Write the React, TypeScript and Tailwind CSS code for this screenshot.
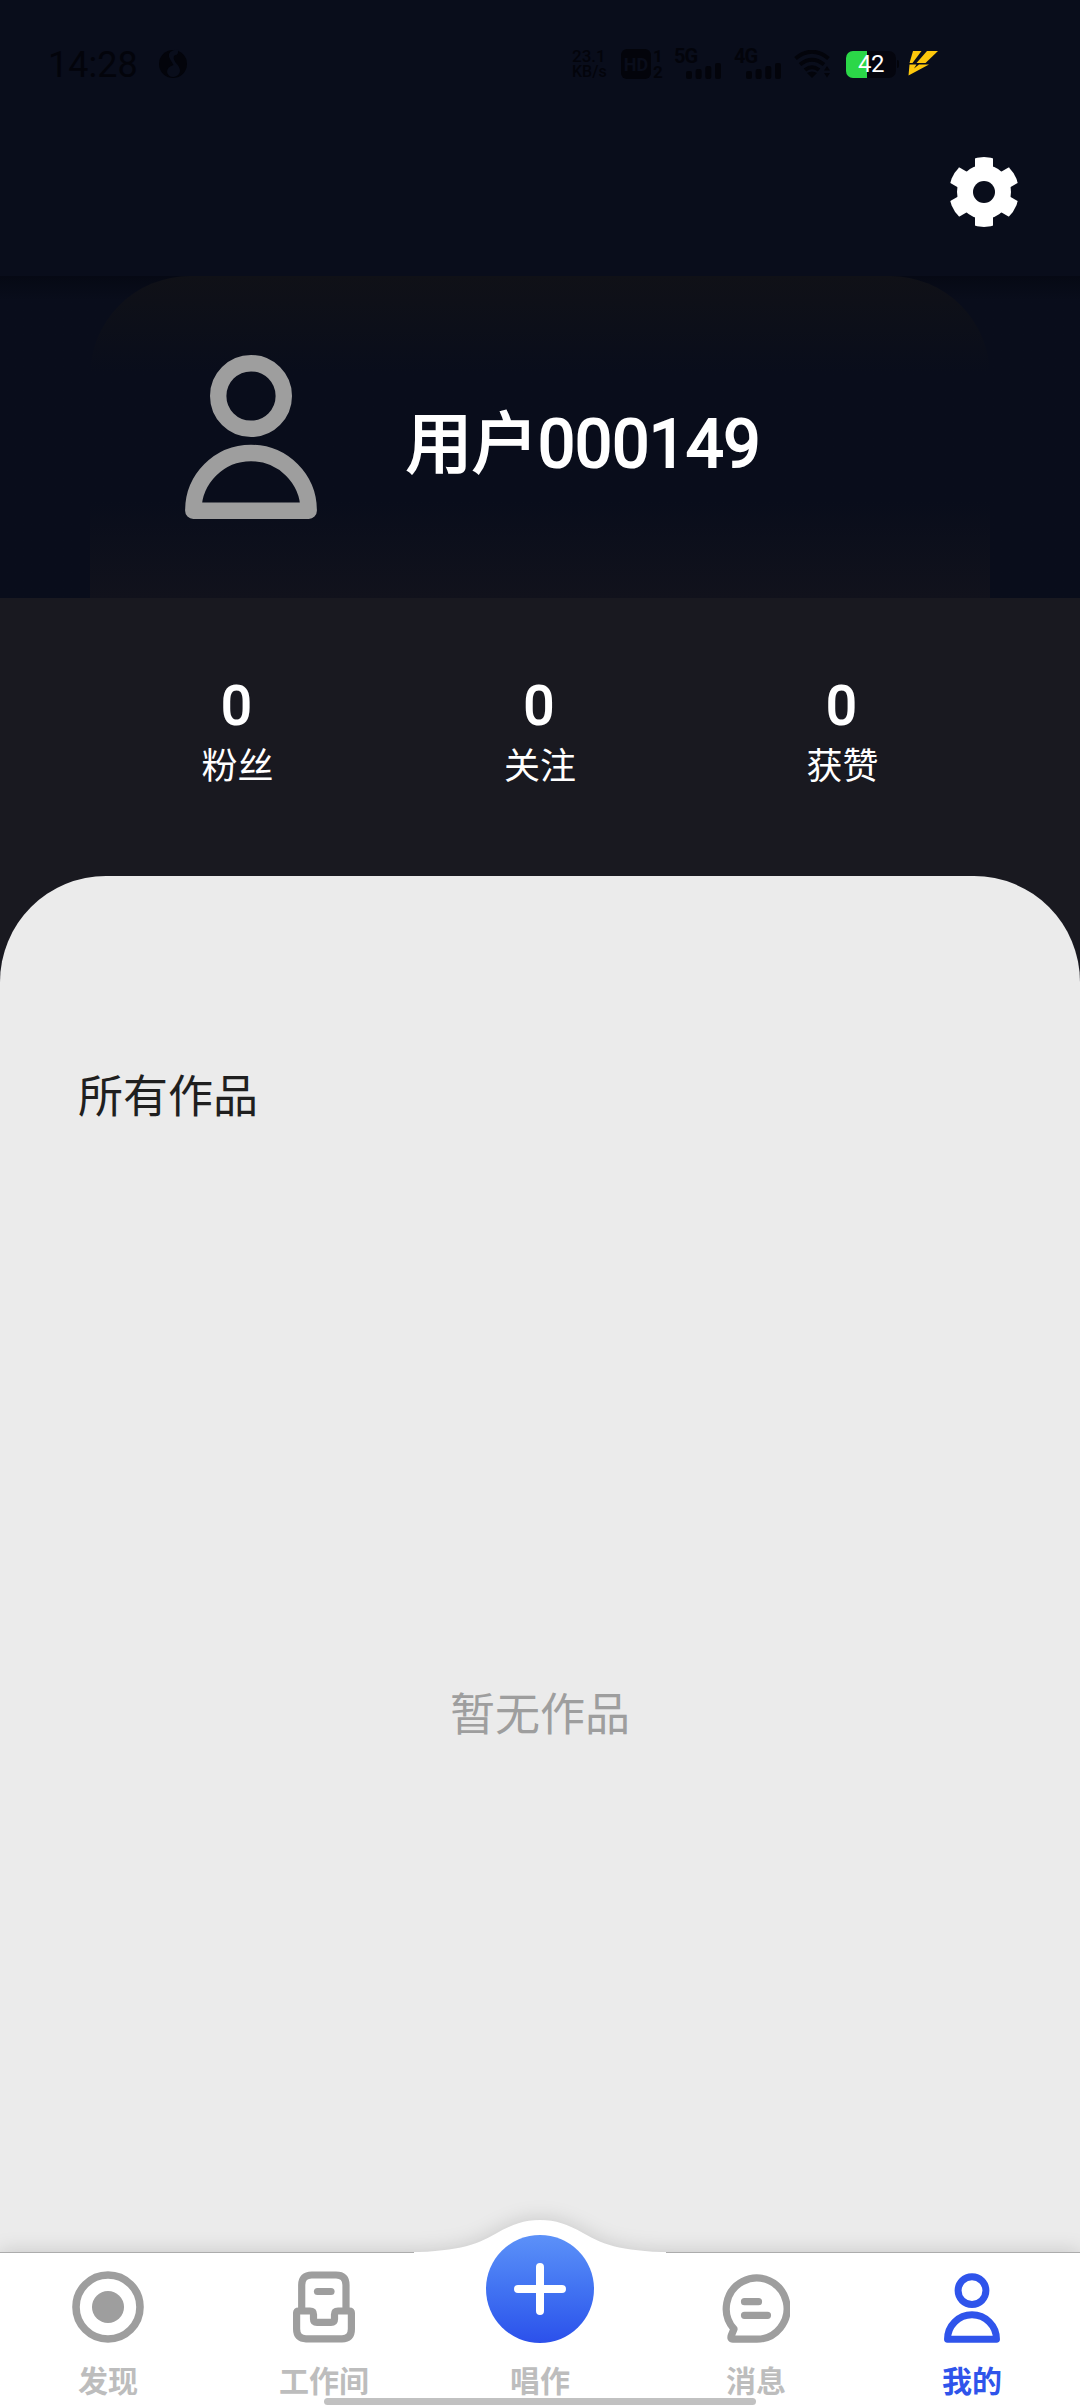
import type { ReactNode } from "react";
import clsx from "clsx";

interface Stat {
  label: string;
  value: number;
}

interface Tab {
  label: string;
  icon: ReactNode;
  active?: boolean;
}

const stats: Stat[] = [
  { label: "粉丝", value: 0 },
  { label: "关注", value: 0 },
  { label: "获赞", value: 0 },
];

function PersonIcon({ className }: { className?: string }) {
  return (
    <svg
      viewBox="0 0 132 164"
      fill="none"
      stroke="currentColor"
      strokeWidth="16.4"
      strokeLinejoin="round"
      className={className}
    >
      <circle cx="66" cy="41" r="32.8" />
      <path d="M8.3 155.7A57.7 57.7 0 0 1 123.7 155.7Z" />
    </svg>
  );
}

function GearIcon() {
  return (
    <svg viewBox="-35 -35 70 70" className="size-[70px] text-white">
      <defs>
        <clipPath id="gear-edge">
          <circle r="35" />
        </clipPath>
        <mask id="gear-hole">
          <rect x="-35" y="-35" width="70" height="70" fill="#fff" />
          <circle r="11" fill="#000" />
        </mask>
      </defs>
      <g fill="currentColor" clipPath="url(#gear-edge)" mask="url(#gear-hole)">
        <circle r="27" />
        <rect x="-9" y="-36" width="18" height="72" />
        <rect x="-9" y="-36" width="18" height="72" transform="rotate(60)" />
        <rect x="-9" y="-36" width="18" height="72" transform="rotate(120)" />
      </g>
    </svg>
  );
}

function DiscoverIcon() {
  return (
    <svg viewBox="0 0 72 72" fill="none" className="size-[72px]">
      <circle cx="36" cy="36" r="32" stroke="currentColor" strokeWidth="7.6" />
      <circle cx="36" cy="36" r="16" fill="currentColor" />
    </svg>
  );
}

function StudioIcon() {
  return (
    <svg
      viewBox="0 0 64 72"
      fill="none"
      stroke="currentColor"
      strokeWidth="7.2"
      strokeLinecap="round"
      strokeLinejoin="round"
      className="h-[72px] w-[64px]"
    >
      <path d="M9.7 38V14Q9.7 4 19.7 4H44Q54 4 54 14V38" />
      <path d="M25.5 20.5H39" />
      <path d="M4.6 42Q4.6 40 6.6 40H18Q21.5 40 21.5 43.5V48Q21.5 51.3 25 51.3H39Q42.5 51.3 42.5 48V43.5Q42.5 40 46 40H57.4Q59.4 40 59.4 42V58Q59.4 67.8 50 67.8H14Q4.6 67.8 4.6 58Z" />
    </svg>
  );
}

function MessageIcon() {
  return (
    <svg
      viewBox="0 0 68 69"
      fill="none"
      stroke="currentColor"
      strokeWidth="7.2"
      strokeLinecap="round"
      strokeLinejoin="round"
      className="mt-[3px] h-[69px] w-[68px]"
    >
      <path d="M12 55A30.4 30.6 0 1 1 34 65.2H11Q8 65.2 9.3 61.5Z" />
      <path d="M22.5 27.7H36.5M22.5 41.3H45.5" />
    </svg>
  );
}

const leftTabs: Tab[] = [
  { label: "发现", icon: <DiscoverIcon /> },
  { label: "工作间", icon: <StudioIcon /> },
];

const rightTabs: Tab[] = [
  { label: "消息", icon: <MessageIcon /> },
  {
    label: "我的",
    icon: <PersonIcon className="mt-[2px] h-[70px] w-[56px]" />,
    active: true,
  },
];

function SignalBars() {
  return (
    <svg viewBox="0 0 36 16" fill="currentColor" className="h-[16px] w-[36px]">
      <rect x="0" y="8" width="6" height="8" rx="2" />
      <rect x="9.6" y="6" width="6" height="10" rx="2" />
      <rect x="19.3" y="3" width="6" height="13" rx="2" />
      <rect x="29" y="0" width="6" height="16" rx="2" />
    </svg>
  );
}

function Signal({ label }: { label: string }) {
  return (
    <div className="flex h-[30px] w-[48px] flex-col">
      <span className="h-[14px] text-[20px] leading-[15px] font-bold tracking-[-1px]">
        {label}
      </span>
      <div className="ml-[12px]">
        <SignalBars />
      </div>
    </div>
  );
}

function StatusBar() {
  return (
    <div className="flex h-[128px] items-center pl-[48px] text-[#03040b]">
      <span className="mt-[2px] w-[111px] text-[36px] leading-[36px]">
        14:28
      </span>
      <svg viewBox="0 0 28 30" className="mb-[2px] h-[30px] w-[28px]">
        <circle cx="14" cy="16" r="14" fill="currentColor" />
        <path
          d="M19 1Q8 3 10 9Q12 13 14.5 17Q8 19 8 24Q9 29 14.5 29Q20.5 28 21 23Q21 19 16.5 14.5Q13 9 16 7Q20 7 19 1Z"
          fill="#090d1b"
        />
      </svg>
      <div className="ml-[385px] flex w-[49px] flex-col text-[17px] leading-[16px] font-medium">
        <span>23.1</span>
        <span className="text-[16px]">KB/s</span>
      </div>
      <div className="flex size-[30px] items-center justify-center rounded-[6px] bg-[#03040b] text-[18px] font-bold text-[#090d1b]">
        HD
      </div>
      <div className="ml-[2px] flex w-[21px] flex-col text-[17px] leading-[16px] font-bold">
        <span>1</span>
        <span>2</span>
      </div>
      <Signal label="5G" />
      <div className="ml-[12px]">
        <Signal label="4G" />
      </div>
      <svg
        viewBox="0 0 36 28"
        fill="none"
        stroke="currentColor"
        strokeWidth="4"
        className="ml-[12px] h-[28px] w-[36px]"
      >
        <path d="M1.5 8.5Q18-5 34.5 8.5M6 14.5Q18 5 30 14.5M11 20Q18 14.5 25 20" />
        <path d="M13 23Q18 20 23 23L18 28Z" fill="currentColor" stroke="none" />
        <path
          d="M30 20.5L33 16L36 20.5ZM30 23L33 27.5L36 23Z"
          fill="currentColor"
          stroke="none"
        />
      </svg>
      <div className="ml-[16px] flex h-[27px] w-[50px] items-center justify-center rounded-[7px] bg-linear-to-r from-[#2bd748] from-42% to-[#04050e] to-42% text-[24px] leading-[27px] tracking-[-0.5px] text-white">
        42
      </div>
      <div className="ml-[1px] h-[8px] w-[2px] rounded-r-full bg-[#03040b]" />
      <svg
        viewBox="0 0 30 26"
        fill="#fdc70c"
        className="mb-[2px] ml-[9px] h-[26px] w-[30px]"
      >
        <path d="M5 1H13.500L4.500 13H1.500Z" />
        <path d="M19 1H30L17.500 13H8.500Z" />
        <path d="M1.500 14.500H8.500L6 18.500L11 14.500H21L0.500 25.500Z" />
      </svg>
    </div>
  );
}

function Header() {
  return (
    <header className="h-[276px] bg-[#090d1b]">
      <StatusBar />
      <div className="flex h-[128px] items-center justify-end pr-[61px]">
        <GearIcon />
      </div>
    </header>
  );
}

function ProfileCard() {
  return (
    <section className="h-[322px] bg-linear-to-b from-[#060914] to-[#090d1b] to-[24px] px-[90px]">
      <div className="flex h-full items-center rounded-t-[100px] bg-linear-to-b from-[#101117] via-[#090d1b] via-30% to-[#090d1b]">
        <div className="flex size-full items-center bg-linear-to-b from-transparent from-70% to-[#11121c] pl-[95px]">
          <PersonIcon className="h-[164px] w-[132px] text-[#9e9e9e]" />
          <h1 className="mt-[17px] ml-[89px] text-[66px] leading-[80px] text-white [-webkit-text-stroke:2.2px_white]">
            用户000149
          </h1>
        </div>
      </div>
    </section>
  );
}

function StatsRow() {
  return (
    <section className="flex h-[278px] justify-center bg-[#191920] pt-[75px]">
      {stats.map((stat) => (
        <div
          key={stat.label}
          className="flex w-[302.5px] flex-col items-center text-white"
        >
          <span className="mr-[2px] text-[54px] leading-[66px] [-webkit-text-stroke:2px_white]">
            {stat.value}
          </span>
          <span className="mt-[2px] text-[36px] leading-[52px]">
            {stat.label}
          </span>
        </div>
      ))}
    </section>
  );
}

function Works() {
  return (
    <main className="h-[1377px] bg-[#191920]">
      <div className="flex h-full flex-col rounded-t-[106px] bg-[#ebebeb] pt-[190px]">
        <h2 className="pl-[78px] text-[45px] leading-[64px] text-[#1f1f1f]">
          所有作品
        </h2>
        <p className="mt-[554px] text-center text-[45px] leading-[64px] text-[#9e9e9e]">
          暂无作品
        </p>
      </div>
    </main>
  );
}

function TabItem({ tab }: { tab: Tab }) {
  return (
    <div
      className={clsx(
        "flex w-[216px] flex-col items-center pt-[19px]",
        tab.active ? "text-[#2f54eb]" : "text-[#9e9e9e]"
      )}
    >
      <div className="flex h-[72px] items-start">{tab.icon}</div>
      <span
        className={clsx(
          "mt-[17px] text-[30px] leading-[44px] font-bold",
          tab.active ? "text-[#2f54eb]" : "text-[#bdbdbd]"
        )}
      >
        {tab.label}
      </span>
    </div>
  );
}

function BottomNav() {
  return (
    <nav className="relative h-[156px]">
      {/* Bar surface with the raised hump behind the create button */}
      <svg
        viewBox="0 0 1080 188"
        className="absolute bottom-0 left-0 h-[188px] w-[1080px] overflow-visible drop-shadow-[0_0_10px_rgba(0,0,0,0.16)]"
      >
        <path
          d="M0 32.500H400C455 32 475 26 497 13C513 4 524 0 540 0C556 0 567 4 583 13C605 26 625 32 680 32.500H1080V188H0Z"
          fill="#fff"
        />
        <path d="M0 32.5H414M666 32.5H1080" stroke="#acacac" strokeWidth="1" />
      </svg>
      <div className="relative flex h-full">
        {leftTabs.map((tab) => (
          <TabItem key={tab.label} tab={tab} />
        ))}
        <div className="flex w-[216px] flex-col items-center">
          <div className="-mt-[17px] flex size-[108px] items-center justify-center rounded-full bg-linear-to-b from-[#5c91f8] to-[#2c50eb]">
            <svg
              viewBox="0 0 52 52"
              stroke="#fff"
              strokeWidth="8"
              strokeLinecap="round"
              className="size-[52px]"
            >
              <path d="M26 4V48M4 26H48" />
            </svg>
          </div>
          <span className="mt-[17px] text-[30px] leading-[44px] font-bold text-[#bdbdbd]">
            唱作
          </span>
        </div>
        {rightTabs.map((tab) => (
          <TabItem key={tab.label} tab={tab} />
        ))}
      </div>
      <div className="absolute bottom-[3px] left-[324px] h-[7px] w-[432px] rounded-full bg-[#c1c1c1]" />
    </nav>
  );
}

export default function App() {
  return (
    <div className="flex h-[2408px] w-[1080px] flex-col overflow-hidden font-[Roboto,'Noto_Sans_CJK_SC',sans-serif]">
      <Header />
      <ProfileCard />
      <StatsRow />
      <Works />
      <BottomNav />
    </div>
  );
}
